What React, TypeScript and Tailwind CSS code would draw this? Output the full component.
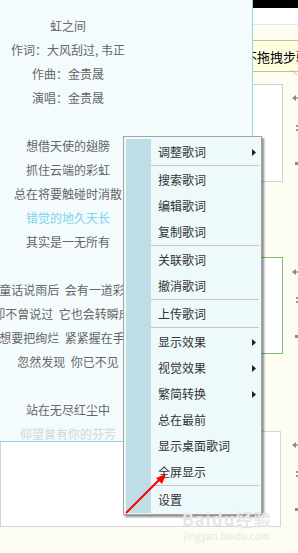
import React from 'react';

const font = "font-['Noto_Sans_CJK_SC','Noto_Sans',sans-serif]";

const lyrics: { text: string; tone?: 'hi' | 'fade' }[] = [
  { text: '虹之间' },
  { text: '作词：大风刮过, 韦正' },
  { text: '作曲：金贵晟' },
  { text: '演唱：金贵晟' },
  { text: '' },
  { text: '想借天使的翅膀' },
  { text: '抓住云端的彩虹' },
  { text: '总在将要触碰时消散' },
  { text: '错觉的地久天长', tone: 'hi' },
  { text: '其实是一无所有' },
  { text: '' },
  { text: '童话说雨后  会有一道彩虹' },
  { text: '却不曾说过  它也会转瞬成空' },
  { text: '想要把绚烂  紧紧握在手中' },
  { text: '忽然发现  你已不见' },
  { text: '' },
  { text: '站在无尽红尘中' },
  { text: '仰望曾有你的芬芳', tone: 'fade' },
];

type MenuEntry = { label: string; sub?: boolean } | 'sep';

const menu: MenuEntry[] = [
  { label: '调整歌词', sub: true },
  'sep',
  { label: '搜索歌词' },
  { label: '编辑歌词' },
  { label: '复制歌词' },
  'sep',
  { label: '关联歌词' },
  { label: '撤消歌词' },
  'sep',
  { label: '上传歌词' },
  'sep',
  { label: '显示效果', sub: true },
  { label: '视觉效果', sub: true },
  { label: '繁简转换', sub: true },
  { label: '总在最前' },
  { label: '显示桌面歌词' },
  { label: '全屏显示' },
  'sep',
  { label: '设置' },
];

// little grey marks at the right edge of each row
const SideIcons = ({ offsets }: { offsets: [number, number, number] }) => (
  <div className="relative w-[15px] shrink-0">
    <svg className="absolute left-[9px]" style={{ top: offsets[0] - 3 }} width="6" height="6" viewBox="0 0 6 6">
      <path d="M0 3 L4 0 L4 6 Z" fill="#8a8a8a" />
      <rect x="4" y="2" width="2" height="2" fill="#b0b0b0" />
    </svg>
    <div className="absolute left-[13px] flex flex-col gap-[2px]" style={{ top: offsets[1] - 3 }}>
      <div className="h-[2px] w-[2px] bg-[#9a9a9a]" />
      <div className="h-[2px] w-[2px] bg-[#9a9a9a]" />
    </div>
    <div className="absolute left-[12px] h-[3px] w-[3px] bg-[#8c8c8c]" style={{ top: offsets[2] - 1 }} />
  </div>
);

const Arrow = () => (
  <svg width="4" height="7" viewBox="0 0 4 7">
    <path d="M0 0 L4 3.5 L0 7 Z" fill="#222" />
  </svg>
);

export default function App() {
  return (
    <div className={`relative h-[553px] w-[298px] overflow-hidden bg-[#fefdf3] ${font}`}>
      {/* window behind */}
      <div className="flex flex-col">
        <div className="h-[8px] bg-black" />
        <div className="h-[17px] border-b border-[#e6e6e6] bg-white" />
        <div className="relative mt-[15px] flex h-[32px] items-center border-y border-[#d8b87a] bg-[#ffffe0] pl-[244px]">
          <span className="whitespace-nowrap text-[13px] leading-none text-black">不拖拽步骤</span>
          <svg className="absolute right-0 top-[29px]" width="6" height="6" viewBox="0 0 6 6">
            <path d="M0 0 L5 5" stroke="#d8b87a" strokeWidth="1" />
          </svg>
        </div>
        <div className="mt-[12px] flex">
          <div className="h-[98px] w-[284px] border border-[#cfcfcf] bg-white" />
          <SideIcons offsets={[14, 44, 79]} />
        </div>
        <div className="mt-[75px] flex">
          <div className="h-[97px] w-[284px] border border-[#7cc06a] bg-white" />
          <SideIcons offsets={[15, 43, 79]} />
        </div>
        <div className="mt-[77px] flex">
          <div className="h-[96px] w-[282px] border border-[#d6d6d6] bg-white" />
          <div className="ml-[2px]">
            <SideIcons offsets={[14, 43, 78]} />
          </div>
        </div>
      </div>

      {/* lyrics window */}
      <div className="absolute left-0 top-0 h-[442px] w-[253px] overflow-hidden border-b border-r border-[#8fd5e8] bg-[#f3fbfd]">
        <div className="flex w-[136px] flex-col items-center pt-[14px]">
          {lyrics.map((l, i) => (
            <div
              key={i}
              className={`h-[24px] shrink-0 whitespace-pre text-[12px] leading-[24px] ${
                l.tone === 'hi' ? 'text-[#7fd3ea]' : l.tone === 'fade' ? 'text-[#d2d6d8]' : 'text-[#666]'
              }`}
            >
              {l.text}
            </div>
          ))}
        </div>
      </div>

      {/* context menu */}
      <div className="absolute left-[123px] top-[136px] flex h-[379px] w-[139px] border border-[#a3a3a3] bg-[#eef9fb] pb-[1px] pl-[2px] pt-[2px] shadow-[2px_2px_2px_rgba(0,0,0,0.45)]">
        <div className="w-[25px] shrink-0 bg-[#bedde4]" />
        <div className="flex flex-1 flex-col">
          {menu.map((m, i) =>
            m === 'sep' ? (
              <div key={i} className="mr-[2px] h-[2px] border-t border-[#c6c6c6]" />
            ) : (
              <div key={i} className="flex h-[26px] items-center justify-between pl-[7px] pr-[5px]">
                <span className="text-[12px] leading-none text-[#333]">{m.label}</span>
                {m.sub && <Arrow />}
              </div>
            )
          )}
        </div>
      </div>

      {/* watermark */}
      <div className="absolute left-[182px] top-[509px] flex flex-col items-center text-[#e6e6e6]">
        <span className="text-[17px] font-bold leading-[20px] tracking-[1px]">Baidu经验</span>
        <span className="text-[10px] leading-[14px]">jingyan.baidu.com</span>
      </div>

      {/* red pointer */}
      <svg className="absolute left-0 top-0" width="298" height="553" viewBox="0 0 298 553">
        <line x1="126" y1="513" x2="160" y2="479" stroke="#ff0000" strokeWidth="2" />
        <path d="M166 474 L156 478 L162 484 Z" fill="#ff0000" />
      </svg>
    </div>
  );
}
